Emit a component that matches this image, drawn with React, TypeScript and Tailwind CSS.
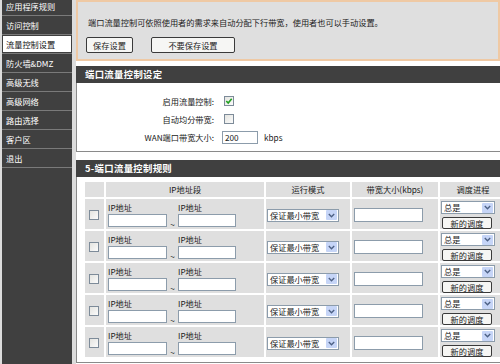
const menu = ['应用程序规则', '访问控制', '流量控制设置', '防火墙&DMZ', '高级无线', '高级网络', '路由选择', '客户区', '退出'];

function Check({ checked = false }: { checked?: boolean }) {
  return (
    <span className="flex h-[10px] w-[10px] items-center justify-center border border-[#7d8b99] bg-gradient-to-br from-[#e4e4e0] to-[#fbfbfb]">
      {checked && (
        <svg width="8" height="8" viewBox="0 0 8 8">
          <path d="M1.3 4 L3.2 6 L6.7 1.8" fill="none" stroke="#21a121" strokeWidth="1.6" />
        </svg>
      )}
    </span>
  );
}

function Select({ label, w }: { label: string; w: string }) {
  return (
    <div className={`flex h-[13px] items-center justify-between border border-[#8c9cab] bg-white pl-[2px] pr-[1px] ${w}`}>
      <span className="leading-none">{label}</span>
      <span className="flex h-[10px] w-[11px] items-center justify-center rounded-[1px] bg-[#c6d5f7]">
        <svg width="7" height="5" viewBox="0 0 7 5">
          <path d="M0.8 1 L3.5 3.7 L6.2 1" fill="none" stroke="#4d6185" strokeWidth="1.4" />
        </svg>
      </span>
    </div>
  );
}

function Row() {
  return (
    <>
      <div className="flex h-[30px] items-center justify-center bg-[#dfdfdf] pr-[1px] pt-[2px]">
        <Check />
      </div>
      <div className="flex h-[30px] bg-[#dfdfdf] pl-[2px] pt-[2px]">
        <div className="flex w-[59px] flex-col">
          <span className="h-[13px] leading-[12px]">IP地址</span>
          <span className="h-[13px] border border-[#8c9cab] bg-white" />
        </div>
        <span className="flex w-[11px] items-end justify-center pb-[1px] leading-none">~</span>
        <div className="flex w-[58px] flex-col">
          <span className="h-[13px] leading-[12px]">IP地址</span>
          <span className="h-[13px] border border-[#8c9cab] bg-white" />
        </div>
      </div>
      <div className="flex h-[30px] items-center bg-[#dfdfdf] pl-[1px] pt-[2px]">
        <Select label="保证最小带宽" w="w-[72px]" />
      </div>
      <div className="flex h-[30px] items-center bg-[#dfdfdf] pl-[2px] pt-[1px]">
        <span className="h-[14px] w-[69px] border border-[#8c9cab] bg-white" />
      </div>
      <div className="flex h-[30px] flex-col gap-[3px] bg-[#dfdfdf] pl-[1px] pt-[2px]">
        <Select label="总是" w="w-[54px]" />
        <button className="ml-[1px] flex h-[12px] w-[50px] items-center justify-center rounded-[2px] border border-[#3a3a3a] bg-[#f6f6f4] leading-none">
          新的调度
        </button>
      </div>
    </>
  );
}

export default function App() {
  return (
    <div className="flex h-[364px] w-[500px] overflow-hidden bg-[#dcdcdc] font-['Noto_Sans_CJK_SC','Liberation_Sans',sans-serif] text-[8.2px] text-[#222]">
      {/* Sidebar */}
      <div className="ml-[2px] flex w-[70px] flex-col bg-[#404040]">
        <div className="mt-[-3px]" />
        {menu.map((m, i) =>
          i === 2 ? (
            <div key={m} className="flex h-[19px] items-center border-b border-[#7a7a7a] px-[1px] py-[1px]">
              <div className="flex h-full w-full items-center bg-white pl-[3px] text-[#111]">{m}</div>
            </div>
          ) : (
            <div key={m} className="flex h-[19px] items-center border-b border-[#7a7a7a] pl-[4px] text-white">
              {m}
            </div>
          )
        )}
      </div>

      {/* Main */}
      <div className="ml-[4px] flex flex-1 flex-col bg-white">
        <div className="h-[61px] border-2 border-[#efc9a4] bg-[#dfdfdf] pl-[8px] pt-[14px]">
          <p className="ml-[2px] leading-[12px]">端口流量控制可依照使用者的需求来自动分配下行带宽，使用者也可以手动设置。</p>
          <div className="mt-[9px] flex gap-[18px]">
            <button className="flex h-[16px] w-[47px] items-center justify-center rounded-[2px] border border-[#3a3a3a] bg-[#f6f6f4]">保存设置</button>
            <button className="flex h-[16px] w-[84px] items-center justify-center rounded-[2px] border border-[#3a3a3a] bg-[#f6f6f4]">不要保存设置</button>
          </div>
        </div>

        {/* 端口流量控制设定 */}
        <div className="mt-[5px] flex h-[17px] items-center bg-[#404040] pl-[9px] text-[9.4px] font-bold tracking-[0.3px] text-white">
          端口流量控制设定
        </div>
        <div className="border-b border-l border-[#8a8a8a] pb-[5px] pt-[9px]">
          <div className="flex h-[18px] items-center">
            <span className="w-[137px] text-right">启用流量控制:</span>
            <span className="ml-[10px]"><Check checked /></span>
          </div>
          <div className="flex h-[18px] items-center">
            <span className="w-[137px] text-right">自动均分带宽:</span>
            <span className="ml-[10px]"><Check /></span>
          </div>
          <div className="flex h-[18px] items-center">
            <span className="w-[137px] text-right">WAN端口带宽大小:</span>
            <span className="ml-[8px] flex h-[13px] w-[36px] items-center border border-[#8c9cab] bg-white pl-[2px]">200</span>
            <span className="ml-[6px]">kbps</span>
          </div>
        </div>

        {/* 5-端口流量控制规则 */}
        <div className="mt-[8px] flex h-[17px] items-center bg-[#404040] pl-[9px] text-[9.4px] font-bold tracking-[0.3px] text-white">
          5-端口流量控制规则
        </div>
        <div className="mb-[1px] flex-1 border-b border-l border-[#8a8a8a] pl-[8px] pt-[5px]">
          <div className="grid grid-cols-[19px_158px_84px_86px_60px] gap-[2px]">
            <div className="h-[15px] bg-[#dfdfdf]" />
            <div className="flex h-[15px] items-center justify-center bg-[#dfdfdf]">IP地址段</div>
            <div className="flex h-[15px] items-center justify-center bg-[#dfdfdf]">运行模式</div>
            <div className="flex h-[15px] items-center justify-center bg-[#dfdfdf]">带宽大小(kbps)</div>
            <div className="flex h-[15px] items-center justify-center bg-[#dfdfdf] pl-[6px]">调度进程</div>
            <Row />
            <Row />
            <Row />
            <Row />
            <Row />
          </div>
        </div>
      </div>
    </div>
  );
}
